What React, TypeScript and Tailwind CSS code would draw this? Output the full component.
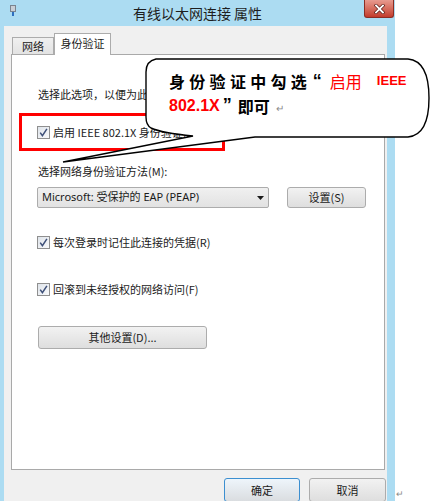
import React from "react";

const ui = { fontFamily: '"Noto Sans", "Noto Sans CJK SC", sans-serif' };
const cjk = { fontFamily: '"Noto Sans CJK SC", "Noto Sans", sans-serif' };
const lat = { fontFamily: '"Liberation Sans", sans-serif' };

function Check() {
  return (
    <span className="w-[13px] h-[13px] shrink-0 border border-[#8f8f8f] bg-linear-to-br from-[#dfe4ea] to-[#f8f9fb] flex items-center justify-center">
      <svg width="9" height="9" viewBox="0 0 9 9">
        <path d="M1.2 4.6 L3.4 7.6 L7.9 0.8" stroke="#3d4f78" strokeWidth="1.5" fill="none" />
      </svg>
    </span>
  );
}

function CheckRow({ label }: { label: string }) {
  return (
    <div className="flex items-center h-[16px] gap-[3px]">
      <Check />
      <span className="text-[11px] leading-[16px] text-[#1b1b1b] whitespace-nowrap" style={cjk}>
        {label}
      </span>
    </div>
  );
}

function Btn({ label, className }: { label: string; className: string }) {
  return (
    <div
      className={
        "flex items-center justify-center rounded-[3px] border border-[#acacac] bg-linear-to-b from-[#f2f2f2] to-[#dedede] text-[11px] text-[#1b1b1b] " +
        className
      }
      style={cjk}
    >
      {label}
    </div>
  );
}

export default function App() {
  return (
    <div className="relative w-[433px] h-[501px] overflow-hidden bg-white" style={ui}>
      <div className="w-[395px] h-[501px] bg-[#acdcf2] flex flex-col">
        {/* Title bar */}
        <div className="h-[26px] grid grid-cols-[1fr_auto_1fr] shrink-0">
          <div className="flex items-start pl-[10px] pt-[5px]">
            <svg width="6" height="11" viewBox="0 0 6 11">
              <rect x="0.5" y="0.5" width="5" height="6" fill="#c9cfd6" stroke="#7a848f" />
              <rect x="2" y="7" width="2" height="4" fill="#2f6fbf" />
            </svg>
          </div>
          <div className="flex items-center justify-center text-[14px] text-[#1e1e1e] leading-none pb-[1px]" style={cjk}>
            有线以太网连接 属性
          </div>
          <div className="flex justify-end pr-[1px]">
            <div className="w-[30px] h-[18px] border border-[#8b2d24] border-t-0 rounded-b-[3px] bg-linear-to-b from-[#e79a8f] to-[#c23a2b] flex items-center justify-center">
              <svg width="11" height="10" viewBox="0 0 11 10">
                <path d="M2 1.5 L9 8.5 M9 1.5 L2 8.5" stroke="#5a1a14" strokeWidth="3.2" strokeLinecap="square" />
                <path d="M2 1.5 L9 8.5 M9 1.5 L2 8.5" stroke="#ffffff" strokeWidth="1.8" strokeLinecap="square" />
              </svg>
            </div>
          </div>
        </div>

        {/* Client area */}
        <div className="ml-[4px] w-[383px] flex-1 bg-[#f0f0f0] flex flex-col">
          {/* Tabs */}
          <div className="flex items-end ml-[8px] mt-[7px] h-[21px]">
            <div className="w-[42px] h-[17px] border border-[#acacac] border-b-0 bg-linear-to-b from-[#f0f0f0] to-[#e3e3e3] flex items-center justify-center text-[11px] text-[#1b1b1b]" style={cjk}>
              网络
            </div>
            <div className="relative z-10 -mb-px w-[57px] h-[22px] border border-[#acacac] border-b-0 bg-white flex items-center justify-center text-[11px] text-[#1b1b1b] pb-[2px]" style={cjk}>
              身份验证
            </div>
          </div>

          {/* Panel */}
          <div className="ml-[7px] w-[374px] h-[416px] border border-[#a9a9a9] bg-white flex flex-col overflow-hidden">
            <div className="mt-[31px] pl-[26px] text-[11px] leading-[16px] text-[#1b1b1b] whitespace-nowrap" style={cjk}>
              选择此选项，以便为此以太网适配器提供经过身份验证的网络访问。
            </div>

            <div className="mt-[11px] ml-[7px] w-[206px] h-[38px] border-[3px] border-[#ff0000] flex items-center pl-[15px]">
              <CheckRow label="启用 IEEE 802.1X 身份验证(N)" />
            </div>

            <div className="mt-[12px] pl-[26px] text-[11px] leading-[16px] text-[#1b1b1b] whitespace-nowrap" style={cjk}>
              选择网络身份验证方法(M):
            </div>

            <div className="mt-[8px] pl-[25px] flex items-center">
              <div className="w-[232px] h-[21px] rounded-[2px] border border-[#acacac] bg-linear-to-b from-[#f0f0f0] to-[#e2e2e2] flex items-center justify-between pl-[4px] pr-[4px]">
                <span className="text-[11px] text-[#1b1b1b] whitespace-nowrap" style={ui}>
                  Microsoft: 受保护的 EAP (PEAP)
                </span>
                <svg width="7" height="4" viewBox="0 0 7 4">
                  <path d="M0 0 L7 0 L3.5 4 Z" fill="#1b1b1b" />
                </svg>
              </div>
              <Btn label="设置(S)" className="ml-[18px] w-[79px] h-[21px]" />
            </div>

            <div className="mt-[26px] pl-[25px]">
              <CheckRow label="每次登录时记住此连接的凭据(R)" />
            </div>

            <div className="mt-[31px] pl-[25px]">
              <CheckRow label="回滚到未经授权的网络访问(F)" />
            </div>

            <div className="mt-[29px] pl-[26px]">
              <Btn label="其他设置(D)..." className="w-[169px] h-[23px]" />
            </div>
          </div>

          {/* Bottom buttons */}
          <div className="flex justify-end gap-[9px] mt-[8px] pr-[1px]">
            <div className="w-[76px] h-[24px] rounded-[3px] border border-[#3c8fd0] bg-linear-to-b from-[#eef5fb] to-[#dadde0] flex items-center justify-center text-[11px] text-[#1b1b1b]" style={cjk}>
              确定
            </div>
            <Btn label="取消" className="w-[77px] h-[24px]" />
          </div>
        </div>
      </div>

      {/* paragraph mark outside window */}
      <div className="absolute left-[396px] top-[489px] text-[9px] leading-none text-[#8a8a8a]" style={ui}>
        ↵
      </div>

      {/* Callout bubble */}
      <svg
        className="absolute left-[60px] top-[55px]"
        width="373"
        height="110"
        viewBox="60 55 373 110"
      >
        <path
          d="M156 59 L408 59 Q429 61 429 98 Q429 135 408 137 L255 137 L63 162 L193 136 Q162 133 151 128 Q146 125 146 117 L146 72 Q146 61 156 59 Z"
          fill="#ffffff"
          stroke="#000000"
          strokeWidth="1.4"
          strokeLinejoin="miter"
        />
      </svg>
      <div className="absolute left-[169px] top-[69px] flex flex-col" style={cjk}>
        <div className="h-[24px] flex items-center whitespace-nowrap">
          <span className="text-[16px] font-bold text-black tracking-[4.3px]">身份验证中勾</span>
          <span className="text-[16px] font-bold text-black">选</span>
          <span className="inline-block w-[23px] pl-[6px] text-[18px] font-bold text-black" style={lat}>“</span>
          <span className="text-[16px] text-[#ff0000]">启用</span>
          <span className="text-[13px] font-bold text-[#ff0000] ml-[15px]" style={lat}>IEEE</span>
        </div>
        <div className="h-[25px] flex items-center whitespace-nowrap">
          <span className="text-[16px] font-bold text-[#ff0000]" style={lat}>802.1X</span>
          <span className="inline-block w-[18px] pl-[3px] text-[18px] font-bold text-black" style={lat}>”</span>
          <span className="text-[16px] font-bold text-black">即可</span>
          <span className="text-[10px] text-[#8a8a8a] ml-[6px] mt-[4px]">↵</span>
        </div>
      </div>
    </div>
  );
}
